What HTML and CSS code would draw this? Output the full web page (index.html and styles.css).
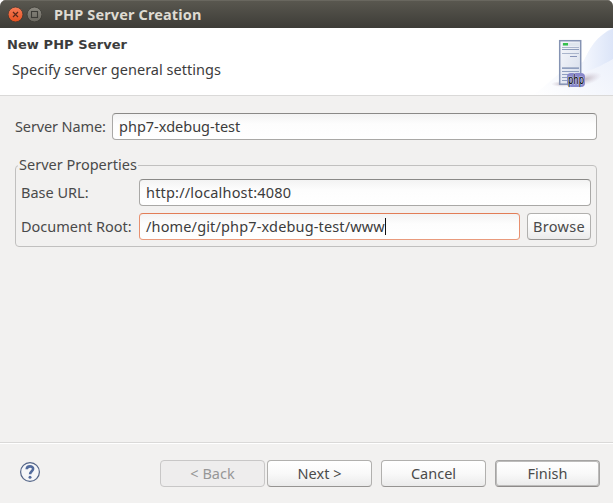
FILE: index.html
```html
<!DOCTYPE html>
<html lang="en">
<head>
<meta charset="utf-8">
<title>PHP Server Creation</title>
<link rel="stylesheet" href="styles.css">
</head>
<body>
<div class="window">
  <header class="titlebar">
    <svg class="controls" width="34" height="16" viewBox="0 0 34 16">
      <defs>
        <linearGradient id="close" x2="0" y2="1"><stop stop-color="#f67d58"/><stop offset="1" stop-color="#e5501f"/></linearGradient>
        <linearGradient id="max" x2="0" y2="1"><stop stop-color="#8b8981"/><stop offset="1" stop-color="#69675f"/></linearGradient>
      </defs>
      <circle cx="7.5" cy="8.5" r="7.4" fill="url(#close)" stroke="#35342e" stroke-width=".7"/>
      <path d="M5 6l5 5M10 6l-5 5" stroke="#58281a" stroke-width="1.2"/>
      <circle cx="26.5" cy="8.5" r="7.4" fill="url(#max)" stroke="#35342e" stroke-width=".7"/>
      <rect x="23.5" y="5.5" width="6" height="6" fill="none" stroke="#3c3b37" stroke-width="1.1"/>
    </svg>
    <span class="title">PHP Server Creation</span>
  </header>
  <section class="banner">
    <div class="heading">
      <h1>New PHP Server</h1>
      <p>Specify server general settings</p>
    </div>
    <svg class="art" width="80" height="67" viewBox="0 0 80 67">
      <defs>
        <linearGradient id="sky" x1="0" y1="1" x2="1" y2="0"><stop stop-color="#ffffff"/><stop offset=".5" stop-color="#edf1fb"/><stop offset="1" stop-color="#dbe4f8"/></linearGradient>
        <linearGradient id="swoop" x1="0" x2="1"><stop stop-color="#f4f7fe"/><stop offset="1" stop-color="#dce5f8"/></linearGradient>
        <linearGradient id="tower" x1="0" y1="0" x2="1" y2="1"><stop stop-color="#f7f8fc"/><stop offset="1" stop-color="#d5dcea"/></linearGradient>
        <radialGradient id="shade"><stop stop-color="#b3a4ae" stop-opacity=".7"/><stop offset="1" stop-color="#c9bfd0" stop-opacity="0"/></radialGradient>
      </defs>
      <path d="M0 67C18 55 28 39 50 34C58 19 65 7 80 0V67Z" fill="url(#sky)" opacity=".65"/>
      <path d="M50 37C55 21 64 7 80 1V31C68 38 57 43 50 44Z" fill="url(#swoop)"/>
      <ellipse cx="53" cy="51" rx="16" ry="6" fill="url(#shade)" transform="rotate(-15 53 51)"/>
      <ellipse cx="29" cy="56" rx="11" ry="3" fill="url(#shade)"/>
      <rect x="26.7" y="12.7" width="21" height="43.5" fill="url(#tower)" stroke="#8593b3" stroke-width="1.5"/>
      <rect x="29" y="15" width="17" height="3" fill="#dfe6ee"/>
      <rect x="30" y="15" width="5" height="2.5" fill="#35c04d"/>
      <path d="M29 19.5h17M29 25.5h17M29 39.5h17" stroke="#aab5cc"/>
      <path d="M29 21.5h17" stroke="#8d9dbc"/>
      <path d="M37 28.5h7" stroke="#8793b8"/>
      <path d="M29 40.5h17M29 43.5h17M29 46.5h6M29 49.5h5M29 52.5h6" stroke="#909fbf"/>
      <rect x="34" y="45" width="18" height="14" rx="4" fill="#8787ca"/>
      <text class="badge" x="35" y="55.5" textLength="16" lengthAdjust="spacingAndGlyphs">php</text>
    </svg>
  </section>
  <main class="content">
    <div class="name-row">
      <label class="t-name">Server Name:</label>
      <div class="field"><span class="t-nameval">php7-xdebug-test</span></div>
    </div>
    <fieldset class="group">
      <legend class="t-legend">Server Properties</legend>
      <div class="grid">
        <label class="t-base">Base URL:</label>
        <div class="field wide"><span class="t-url">http://localhost:4080</span></div>
        <label class="t-root">Document Root:</label>
        <div class="field focused"><span class="t-path">/home/git/php7-xdebug-test/www</span><i class="caret"></i></div>
        <div class="button"><span class="t-browse">Browse</span></div>
      </div>
    </fieldset>
  </main>
  <footer class="footer">
    <svg class="help" width="22" height="22" viewBox="0 0 22 22">
      <circle cx="11" cy="11" r="9.4" fill="#f5f6f8" stroke="#536487" stroke-width="1.2"/>
      <path d="M7.7 8.3C7.8 4.3 14.3 4.5 14.1 8C14 10.3 11.1 10.3 11.1 13.3" fill="none" stroke="#536b9c" stroke-width="2.6"/>
      <circle cx="11" cy="16.3" r="1.5" fill="#536b9c"/>
    </svg>
    <div class="button disabled"><span class="t-back">&lt; Back</span></div>
    <div class="button next"><span class="t-next">Next &gt;</span></div>
    <div class="button cancel"><span class="t-cancel">Cancel</span></div>
    <div class="button default"><span class="t-finish">Finish</span></div>
  </footer>
</div>
</body>
</html>
```
FILE: styles.css
```css
* { box-sizing: border-box; }
body {
  margin: 0;
  background: #fff;
  font: 14.5px/20px "Noto Sans", "Open Sans", sans-serif;
  color: #4a4a4a;
  overflow: hidden;
}
span, label, legend { white-space: nowrap; }
label, .field span, .button span { padding-bottom: 2px; }
.window {
  width: 613px;
  height: 503px;
  display: flex;
  flex-direction: column;
  background: #f2f1f0;
  border-radius: 6px 6px 0 0;
  overflow: hidden;
}
.titlebar {
  flex: none;
  height: 28px;
  padding-left: 8px;
  display: flex;
  align-items: center;
  gap: 12px;
  background: linear-gradient(#5a5850, #3d3c37);
  box-shadow: inset 0 1px #69675f;
}
.controls { display: block; }
.title { font-weight: 700; color: #dfdbd2; font-size: 14.5px; letter-spacing: .12px; }
.banner {
  flex: none;
  height: 68px;
  display: flex;
  justify-content: space-between;
  background: #fff;
  border-bottom: 1px solid #dad9d8;
}
.art { display: block; }
.badge { font: 12px "DejaVu Sans", sans-serif; fill: #000; stroke: #dcdcf2; stroke-width: 1px; paint-order: stroke; stroke-linejoin: round; }
h1 { margin: 7px 0 0 7px; font: 700 13px/20px "DejaVu Sans", sans-serif; letter-spacing: .08px; color: #3c3c3c; }
.heading p { margin: 4px 0 0 12px; letter-spacing: .03px; color: #3c3c3c; }
.content { flex: none; height: 346px; padding: 17px 16px 0 15px; }
.name-row { display: grid; grid-template-columns: 97px 1fr; align-items: center; }
.field {
  height: 27px;
  padding-left: 6px;
  display: flex;
  align-items: center;
  border: 1px solid #a9a8a6;
  border-top-color: #8a8987;
  border-radius: 4px;
  background: linear-gradient(#f3f3f3, #fdfdfd 40%, #fff);
  color: #3c3c3c;
}
.field.focused { border-color: #e27d57 #e8906f #e99b7d; }
.caret { width: 1px; height: 17px; background: #111; }
.t-name { letter-spacing: -.12px; }
.t-url { letter-spacing: .18px; }
.t-path { letter-spacing: .15px; }
.t-browse { letter-spacing: .3px; }
.group {
  height: 92px;
  margin: 15px 0 0;
  padding: 4px 5px 0;
  border: 1px solid #c1c0bf;
  border-radius: 4px;
}
.group legend { padding: 0 1px 2px; margin-left: -3px; height: 20px; line-height: 18px; }
.grid { display: grid; grid-template-columns: 118px 381px 64px; column-gap: 0; row-gap: 7px; align-items: center; }
.grid .button { margin-left: 7px; width: 64px; height: 27px; }
.wide { grid-column: 2 / 4; width: 452px; }
.button {
  display: flex;
  align-items: center;
  justify-content: center;
  border: 1px solid #b1b0ae;
  border-bottom-color: #969492;
  border-radius: 4px;
  background: linear-gradient(#fff, #f9f9f9 50%, #ebebeb);
}
.footer {
  flex: 1;
  display: flex;
  align-items: flex-start;
  padding: 17px 13px 0 19px;
  border-top: 1px solid #dad9d8;
  box-shadow: inset 0 1px #fff;
}
.footer .button { width: 105px; height: 27px; }
.help { margin: 1px 119px 0 0; flex: none; }
.footer .next { margin-left: 2px; }
.footer .cancel { margin-left: 9px; }
.footer .default { margin-left: 9px; border-color: #a5a4a3 #a5a4a3 #8e8b8a; box-shadow: inset 0 0 0 1px #bdbcbb; }
.footer .disabled { border-color: #c8c7c7; background: #eeeded; color: #979797; }
```
